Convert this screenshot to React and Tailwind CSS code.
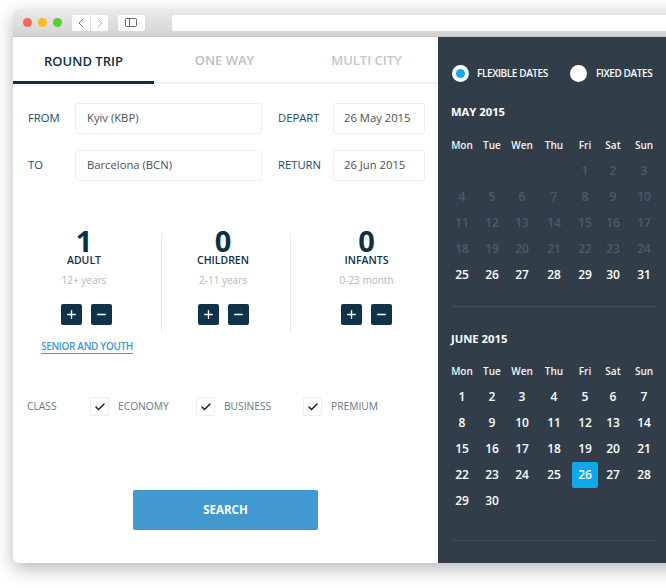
import React from 'react';
import { Plus, Minus, Check, ChevronLeft, ChevronRight } from 'lucide-react';

const DAYS = ['Mon', 'Tue', 'Wen', 'Thu', 'Fri', 'Sat', 'Sun'];

const may = [null, null, null, null, 1, 2, 3, 4, 5, 6, 7, 8, 9, 10, 11, 12, 13, 14, 15, 16, 17, 18, 19, 20, 21, 22, 23, 24, 25, 26, 27, 28, 29, 30, 31];
const june = Array.from({ length: 30 }, (_, i) => i + 1);

const Calendar = ({ title, days, firstActive, selected, gridClass }) => (
  <div>
    <h3 className="pl-[13px] text-[11.25px] leading-[16px] font-bold text-white">{title}</h3>
    <div className={`${gridClass} grid grid-cols-[28px_32px_28px_36px_26px_30px_32px] auto-rows-[26px] ml-[10px] text-center`}>
      {DAYS.map((d) => (
        <div key={d} className="flex items-center justify-center text-[10px] font-semibold text-[#f2f4f5]">{d}</div>
      ))}
      {days.map((day, i) => (
        <div
          key={i}
          className={`flex items-center justify-center text-[12px] font-semibold ${
            day === selected ? 'bg-[#0ea9ec] rounded-[2px] text-white' : day >= firstActive ? 'text-white' : 'text-[#4d5a66]'
          }`}
        >
          {day}
        </div>
      ))}
    </div>
  </div>
);

const Field = ({ label, value, labelWidth, inputWidth, inputPad }) => (
  <div className="flex items-center">
    <label className={`${labelWidth} text-[11.25px] text-[#1d4a68]`}>{label}</label>
    <div className={`${inputWidth} ${inputPad} h-[31px] flex items-center bg-white border border-[#eceff1] rounded-[2px] text-[11.25px] text-[#4a5058]`}>
      {value}
    </div>
  </div>
);

const Counter = ({ count, label, hint, className, buttonsClass }) => (
  <div className={`flex flex-col items-center ${className}`}>
    <div className="h-[24px] text-[29px] leading-[24px] font-bold text-[#0f2f45]">{count}</div>
    <div className="text-[10.5px] leading-[14px] font-semibold text-[#0f2f45]">{label}</div>
    <div className="mt-[6px] text-[10px] leading-[14px] text-[#aeb8c2]">{hint}</div>
    <div className={`mt-[17px] flex gap-[9px] ${buttonsClass}`}>
      <button className="w-[21px] h-[21px] flex items-center justify-center bg-[#11334a] rounded-[2px] text-white">
        <Plus size={13} strokeWidth={2.5} />
      </button>
      <button className="w-[21px] h-[21px] flex items-center justify-center bg-[#11334a] rounded-[2px] text-white">
        <Minus size={13} strokeWidth={2.5} />
      </button>
    </div>
  </div>
);

const ClassOption = ({ label, className }) => (
  <div className={`flex items-center ${className}`}>
    <span className="w-[19px] h-[19px] flex items-center justify-center bg-white border border-[#eceef0] rounded-[2px] text-[#0f2233]">
      <Check size={12} strokeWidth={3} />
    </span>
    <span className="ml-[9px] text-[10.25px] text-[#64798c]">{label}</span>
  </div>
);

const App = () => {
  return (
    <div className="w-[666px] h-[588px] overflow-hidden bg-white pl-[13px] pt-[9px]" style={{ fontFamily: '"Open Sans", "Noto Sans", sans-serif' }}>
      <div className="w-[680px] h-[554px] flex flex-col rounded-[7px] overflow-hidden shadow-[0_6px_18px_rgba(0,0,0,0.28)]">
        {/* Browser toolbar */}
        <div className="h-[28px] shrink-0 flex items-center pl-[10px] bg-gradient-to-b from-[#ebebeb] to-[#d3d3d3] border-b border-[#c2c2c2]">
          <span className="w-[9px] h-[9px] rounded-full bg-[#f4675c]"></span>
          <span className="ml-[6px] w-[9px] h-[9px] rounded-full bg-[#f6bd22]"></span>
          <span className="ml-[6px] w-[9px] h-[9px] rounded-full bg-[#5ccb3a]"></span>
          <div className="ml-[10px] flex gap-px">
            <div className="w-[18px] h-[16px] flex items-center justify-center bg-white rounded-l-[2px] text-[#555]">
              <ChevronLeft size={16} strokeWidth={1.25} />
            </div>
            <div className="w-[17px] h-[16px] flex items-center justify-center bg-white rounded-r-[2px] text-[#aaa]">
              <ChevronRight size={16} strokeWidth={1.25} />
            </div>
          </div>
          <div className="ml-[10px] w-[27px] h-[16px] flex items-center justify-center bg-white rounded-[2px]">
            <svg width="13" height="10" viewBox="0 0 13 10" fill="none" stroke="#666" strokeWidth="1">
              <rect x="0.5" y="0.5" width="11" height="8" rx="1" />
              <path d="M4.5 0.5v8" />
            </svg>
          </div>
          <div className="ml-[27px] w-[520px] h-[16px] bg-white rounded-[3px]"></div>
        </div>

        <div className="flex-1 flex min-h-0">
          {/* Search form */}
          <div className="w-[425px] shrink-0 bg-white flex flex-col">
            <div className="h-[47px] shrink-0 grid grid-cols-[141px_141px_143px] border-b-2 border-[#f0f3f5] text-[13px] font-semibold">
              <div className="-mb-[2px] pt-[6px] flex items-center justify-center border-b-[3px] border-[#0f2f45] text-[#0f2f45]">ROUND TRIP</div>
              <div className="pt-[3px] flex items-center justify-center text-[#b9bfc4]">ONE WAY</div>
              <div className="pt-[3px] flex items-center justify-center text-[#c3c8cc]">MULTI CITY</div>
            </div>

            <div className="mt-[19px] pl-[15px] flex flex-col gap-[16px]">
              <div className="flex gap-[16px]">
                <Field label="FROM" value="Kyiv (KBP)" labelWidth="w-[47px]" inputWidth="w-[187px]" inputPad="pl-[11px]" />
                <Field label="DEPART" value="26 May 2015" labelWidth="w-[55px]" inputWidth="w-[92px]" inputPad="pl-[10px]" />
              </div>
              <div className="flex gap-[16px]">
                <Field label="TO" value="Barcelona (BCN)" labelWidth="w-[47px]" inputWidth="w-[187px]" inputPad="pl-[11px]" />
                <Field label="RETURN" value="26 Jun 2015" labelWidth="w-[55px]" inputWidth="w-[92px]" inputPad="pl-[10px]" />
              </div>
            </div>

            <div className="mt-[48px] flex h-[104px]">
              <Counter count="1" label="ADULT" hint="12+ years" className="w-[148px] pr-[6px]" buttonsClass="ml-[5px]" />
              <div className="self-end w-px h-[99px] bg-[#e6ebef]"></div>
              <Counter count="0" label="CHILDREN" hint="2-11 years" className="w-[128px] pr-[6px]" />
              <div className="self-end w-px h-[99px] bg-[#e6ebef]"></div>
              <Counter count="0" label="INFANTS" hint="0-23 month" className="w-[147px] pl-[4px]" />
            </div>

            <a className="mt-[7px] ml-[28px] self-start text-[10px] tracking-[-0.35px] leading-[13px] font-semibold text-[#3d9ad3] border-b border-[#3d9ad3]">SENIOR AND YOUTH</a>

            <div className="mt-[43px] pl-[14px] flex items-center">
              <span className="w-[63px] text-[10.25px] text-[#64798c]">CLASS</span>
              <ClassOption label="ECONOMY" className="w-[106px]" />
              <ClassOption label="BUSINESS" className="w-[107px]" />
              <ClassOption label="PREMIUM" />
            </div>

            <button className="mt-[74px] ml-[120px] w-[185px] h-[40px] flex items-center justify-center bg-[#4299d0] rounded-[2px] text-white text-[11.5px] font-bold">
              SEARCH
            </button>
          </div>

          {/* Date picker */}
          <div className="flex-1 bg-[#313e4a] pt-[28px]">
            <div className="pl-[14px] flex items-center">
              <span className="w-[17px] h-[17px] flex items-center justify-center bg-white rounded-full">
                <span className="w-[9px] h-[9px] rounded-full bg-[#0ea9ec]"></span>
              </span>
              <span className="ml-[8px] text-[10px] tracking-[-0.4px] font-semibold text-white">FLEXIBLE DATES</span>
              <span className="ml-[22px] w-[17px] h-[17px] bg-white rounded-full"></span>
              <span className="ml-[9px] text-[10px] tracking-[-0.4px] font-semibold text-white">FIXED DATES</span>
            </div>

            <div className="mt-[22px]">
              <Calendar title="MAY 2015" days={may} firstActive={25} gridClass="mt-[12px]" />
            </div>
            <div className="mt-[18px] ml-[14px] w-[205px] h-px bg-[#424f5b]"></div>

            <div className="mt-[24px]">
              <Calendar title="JUNE 2015" days={june} firstActive={1} selected={26} gridClass="mt-[11px]" />
            </div>
            <div className="mt-[26px] ml-[14px] w-[205px] h-px bg-[#424f5b]"></div>
          </div>
        </div>
      </div>
    </div>
  );
};

export default App;
